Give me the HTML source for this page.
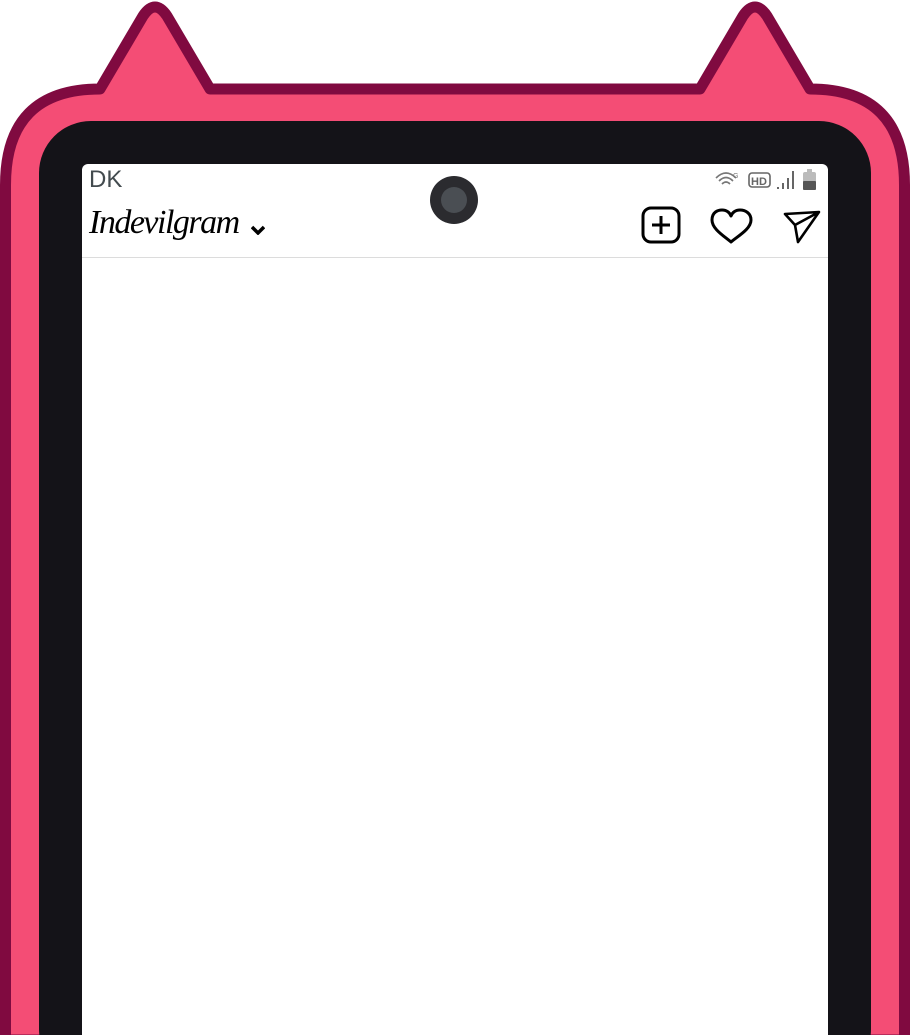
<!DOCTYPE html>
<html><head><style>
html,body{margin:0;padding:0;background:#fff;width:910px;height:1035px;overflow:hidden;position:relative}
.abs{position:absolute}
</style></head><body>
<svg class="abs" style="left:0;top:0" width="910" height="1035" viewBox="0 0 910 1035">
<path d="M5.5 1040 L5.5 185 Q5.5 89 100 89 L143 16 Q155 -2 167 16 L210 89 L700 89 L743 16 Q755 -2 767 16 L810 89 Q904.5 89 904.5 185 L904.5 1040 Z" fill="#f44d75" stroke="#800a40" stroke-width="11" stroke-linejoin="round"/>
<rect x="39" y="121" width="832" height="960" rx="52" fill="#141318"/>
<rect x="82" y="164" width="746" height="900" rx="6" fill="#fff"/>
<line x1="82" y1="257.5" x2="828" y2="257.5" stroke="#dcdcdc" stroke-width="1"/>
<circle cx="454" cy="200" r="24" fill="#2b2b2f"/>
<circle cx="454" cy="200" r="13" fill="#4a4e53"/>
<!-- plus box -->
<rect x="643" y="208" width="36" height="34" rx="8" fill="none" stroke="#000" stroke-width="3"/>
<path d="M661 216 V234 M652 225 H670" stroke="#000" stroke-width="3"/>
<!-- heart -->
<path d="M731 242 C724 236 712 229 712 220 C712 212 718 210 722 210 C727 210 730 213 731 216 C732 213 735 210 740 210 C745 210 751 213 751 220 C751 229 738 236 731 242 Z" fill="none" stroke="#000" stroke-width="3" stroke-linejoin="round"/>
<!-- send -->
<path d="M785 214 L819 212 L798 242 L795 225 Z M795 225 L819 212" fill="none" stroke="#000" stroke-width="2.6" stroke-linejoin="round"/>
<!-- status icons -->
<path d="M716 178 Q726 168 736 178 M719 181 Q726 174 733 181 M722 184 Q726 180 730 184" fill="none" stroke="#777" stroke-width="1.6"/>
<text x="733" y="178" font-family="Liberation Sans" font-size="7" fill="#777">G</text>
<rect x="749" y="173" width="21" height="14" rx="3" fill="none" stroke="#666" stroke-width="1.6"/>
<text x="751" y="185" font-family="Liberation Sans" font-weight="bold" font-size="11" fill="#666">HD</text>
<path d="M778 189 V187 M783 189 V183 M788 189 V178 M793 189 V171" stroke="#666" stroke-width="2"/>
<rect x="803" y="172" width="13" height="18" rx="2" fill="#bbb"/>
<rect x="803" y="181" width="13" height="9" rx="1" fill="#555"/>
<rect x="807" y="169" width="5" height="3" fill="#bbb"/>
</svg>
<div class="abs" style="left:89px;top:166px;font:24px 'Liberation Sans',sans-serif;color:#434b4f">DK</div>
<div class="abs" style="left:89px;top:204px;font:italic 34px 'Liberation Serif',serif;color:#000;letter-spacing:-1.5px">Indevilgram</div>
<svg class="abs" style="left:251px;top:225px" width="14" height="10"><path d="M1 2 L7 8 L13 2" fill="none" stroke="#000" stroke-width="3.5"/></svg>
</body></html>
